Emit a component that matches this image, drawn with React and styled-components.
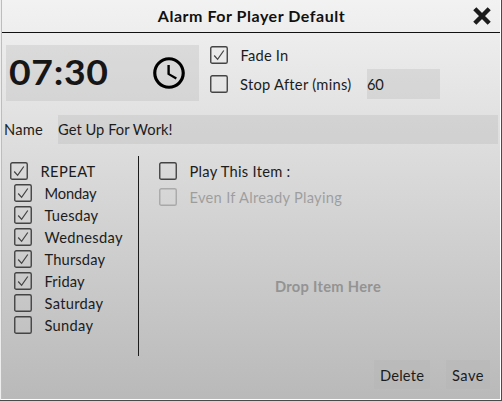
import React from 'react';
import styled, { createGlobalStyle } from 'styled-components';

const Global = createGlobalStyle`
  * { box-sizing: border-box; }
  html, body { margin: 0; overflow: hidden; }
`;

const field = 'rgba(180, 180, 180, 0.3)';

const Frame = styled.div`
  width: 502px;
  height: 401px;
  padding-left: 1px;
  background: #ededed;
  border-right: 1px solid #4a4a4a;
  border-bottom: 1px solid #4a4a4a;
  font: 14.7px/20px Lato, sans-serif;
  color: #1c1c1c;
`;
const Panel = styled.main`
  height: 400px;
  display: flex;
  flex-direction: column;
  border: solid #fff;
  border-width: 0 1px 1px 0;
  box-shadow: inset 1px 0 #bdbdbd;
  background: linear-gradient(#f2f2f2, #b9b9b9);
`;
const Text = styled.span`
  white-space: pre;
  letter-spacing: ${(p) => p.$track || 0}px;
`;
const Header = styled.header`
  flex: none;
  height: 33px;
  display: grid;
  grid-template-columns: 1fr 20px;
  align-items: center;
  padding: 0 8px 0 29px;
  margin-left: 1px;
  border-bottom: 1px solid #111;
`;
const Title = styled.h1`
  margin: 0 0 1px;
  text-align: center;
  font-size: 16px;
  line-height: 20px;
  font-weight: 700;
  letter-spacing: 0.53px;
  color: #111;
`;
const IconButton = styled.button`
  display: flex;
  padding: 0;
  border: 0;
  background: none;
  color: #1c1c1c;
`;
const TimeRow = styled.section`
  height: 56px;
  margin: 12px 0 0 5px;
  display: flex;
`;
const TimeBox = styled.div`
  width: 193px;
  display: flex;
  align-items: center;
  justify-content: space-between;
  padding: 0 11px 0 3px;
  background: ${field};
`;
const Time = styled.time`
  margin-bottom: 2px;
  font-size: 34px;
  line-height: 40px;
  font-weight: 700;
  letter-spacing: 0.6px;
  transform: scaleX(1.1);
  transform-origin: left;
  color: #161616;
`;
const Options = styled.div`
  margin-left: 11px;
  display: grid;
  grid-template-rows: 20px 30px;
  row-gap: 4px;
`;
const OptionRow = styled.div`
  display: flex;
  align-items: center;
`;
const Minutes = styled.div`
  width: 73px;
  height: 30px;
  margin-left: 15px;
  line-height: 30px;
  background: ${field};
`;
const CheckLabel = styled.label`
  display: flex;
  align-items: center;
  gap: ${(p) => p.$gap}px;
  height: ${(p) => p.$height || 20}px;
  min-width: ${(p) => p.$width || 0}px;
  opacity: ${(p) => (p.$disabled ? 0.3 : 1)};
`;
const Box = styled.svg`
  flex: none;
  width: 18px;
  height: 18px;
  fill: none;
  stroke: #444;
`;
const NameRow = styled.section`
  display: grid;
  grid-template-columns: 54px 1fr;
  height: 29px;
  line-height: 29px;
  margin: 14px 2px 0 3px;
`;
const NameField = styled.div`
  background: ${field};
`;
const Body = styled.section`
  display: flex;
  height: 200px;
  margin-top: 12px;
`;
const Repeat = styled.div`
  width: 138px;
  padding: 4px 0 0 9px;
  border-right: 1px solid #1c1c1c;
`;
const Days = styled.div`
  padding-left: 4px;
`;
const Item = styled.div`
  flex: 1;
  padding: 5px 0 0 20px;
  display: flex;
  flex-direction: column;
  gap: 6px;
`;
const DropZone = styled.div`
  margin: 63px 3px 0 0;
  align-self: center;
  font-weight: 700;
  color: #939393;
`;
const Actions = styled.footer`
  display: flex;
  justify-content: flex-end;
  gap: 16px;
  margin: 4px 10px 0 0;
`;
const Button = styled.button`
  width: ${(p) => p.$width}px;
  height: 29px;
  padding: 0;
  border: 0;
  background: ${field};
  color: inherit;
  font: inherit;
`;

function Check({ label, track, on, gap = 12.5, ...rest }) {
  return (
    <CheckLabel $gap={gap} {...rest}>
      <Box viewBox="0 0 18 18">
        <rect x="0.75" y="0.75" width="16.5" height="16.5" rx="1.6" strokeWidth="1.4" />
        {on && <path d="M4.2 9.5 7.6 13.3 13.8 4.5" strokeWidth="1.25" />}
      </Box>
      <Text $track={track}>{label}</Text>
    </CheckLabel>
  );
}

const days = [
  ['Monday', -0.14, true],
  ['Tuesday', 0.2, true],
  ['Wednesday', 0.31, true],
  ['Thursday', 0.15, true],
  ['Friday', 0.12, true],
  ['Saturday', 0.3, false],
  ['Sunday', 0.29, false],
];

export default function App() {
  return (
    <Frame>
      <Global />
      <Panel>
        <Header>
          <Title>Alarm For Player Default</Title>
          <IconButton aria-label="Close">
            <svg width="20" height="20" viewBox="0 0 20 20" stroke="currentColor" strokeWidth="4.4">
              <path d="M2.8 2.8 17.2 17.2M17.2 2.8 2.8 17.2" />
            </svg>
          </IconButton>
        </Header>
        <TimeRow>
          <TimeBox>
            <Time>07:30</Time>
            <svg width="38" height="38" viewBox="0 0 24 24" fill="#000">
              <path d="M11.99 2C6.47 2 2 6.48 2 12s4.47 10 9.99 10C17.52 22 22 17.52 22 12S17.52 2 11.99 2zM12 20c-4.42 0-8-3.58-8-8s3.58-8 8-8 8 3.58 8 8-3.58 8-8 8zm.5-13H11v6l5.25 3.15.75-1.23-4.5-2.67z" />
            </svg>
          </TimeBox>
          <Options>
            <Check label="Fade In" track={0.2} on />
            <OptionRow>
              <Check label="Stop After (mins)" track={0.27} gap={12} $width={142} />
              <Minutes><Text $track={-0.3}>60</Text></Minutes>
            </OptionRow>
          </Options>
        </TimeRow>
        <NameRow>
          <Text $track={0.21}>Name</Text>
          <NameField><Text $track={0.03}>Get Up For Work!</Text></NameField>
        </NameRow>
        <Body>
          <Repeat>
            <Check label="REPEAT" track={0.42} on $height={22} />
            <Days>
              {days.map(([label, track, on]) => (
                <Check key={label} label={label} track={track} on={on} $height={22} />
              ))}
            </Days>
          </Repeat>
          <Item>
            <Check label="Play This Item :" track={0.27} />
            <Check label="Even If Already Playing" track={0.28} $disabled />
            <DropZone><Text $track={0.3}>Drop Item Here</Text></DropZone>
          </Item>
        </Body>
        <Actions>
          <Button $width={56}><Text $track={0.2}>Delete</Text></Button>
          <Button $width={44}><Text $track={0.5}>Save</Text></Button>
        </Actions>
      </Panel>
    </Frame>
  );
}
